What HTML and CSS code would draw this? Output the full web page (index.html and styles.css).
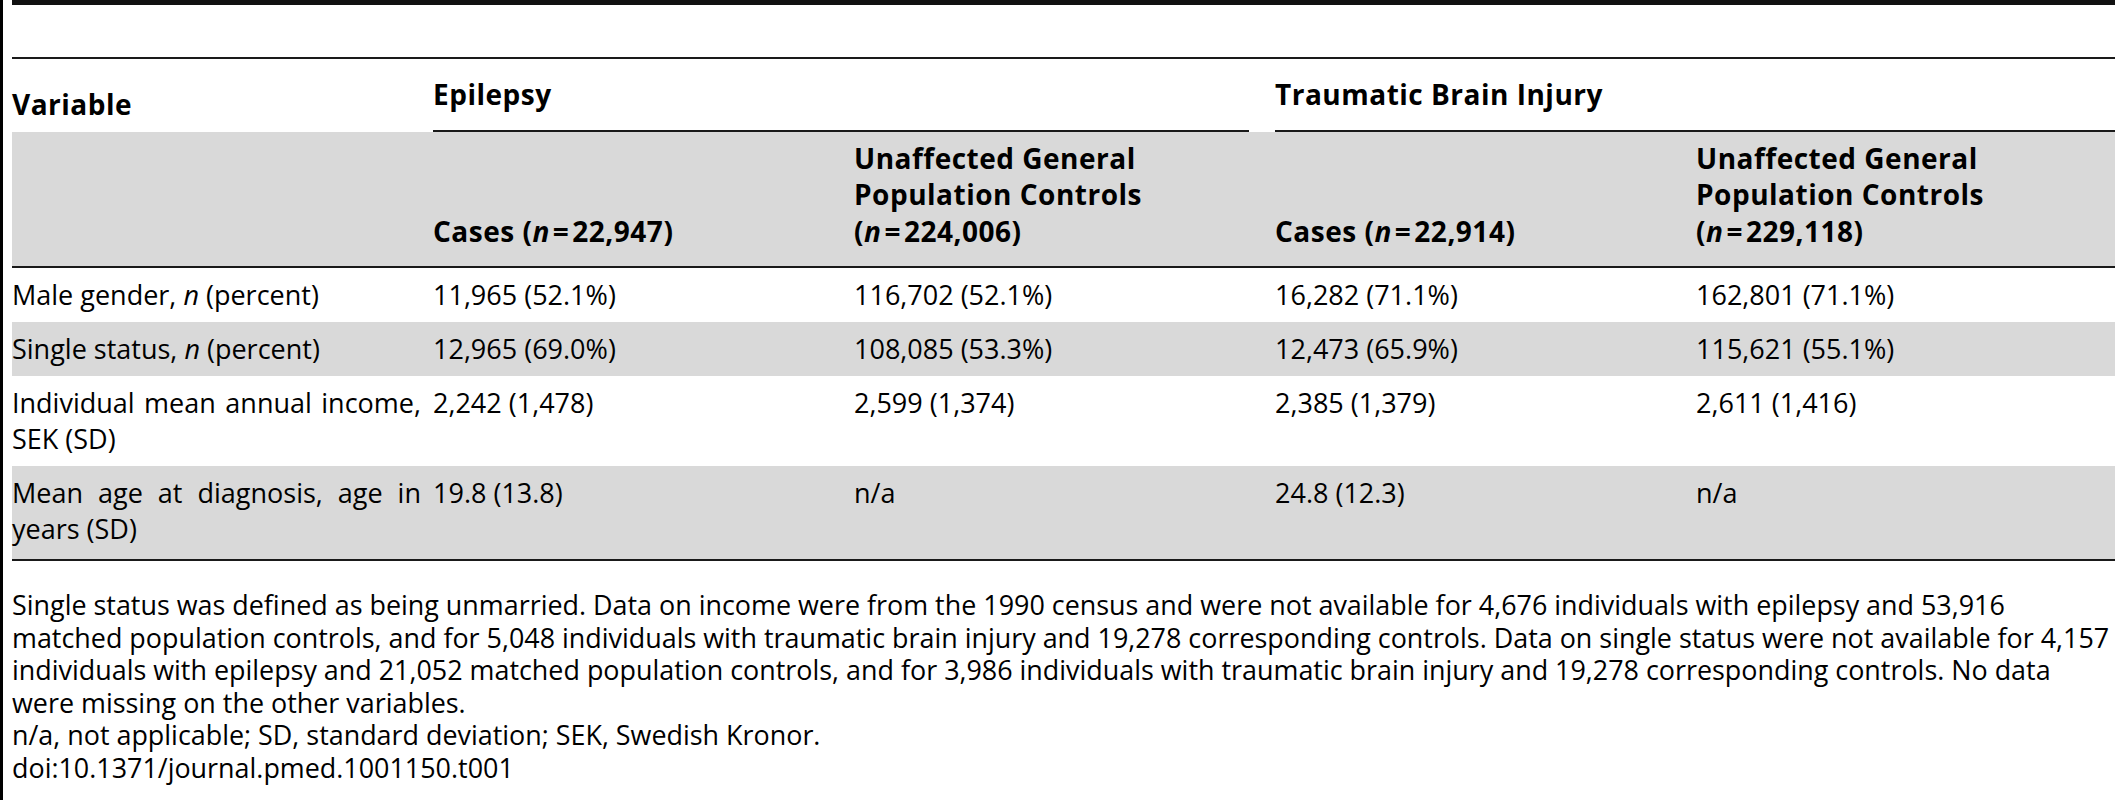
FILE: index.html
```html
<!DOCTYPE html>
<html lang="en">
<head>
    <meta charset="UTF-8">
    <title>Table 1. Characteristics of cases and controls</title>
    <link rel="stylesheet" href="styles.css">
</head>
<body>

<div class="sheet">
    <div class="frame">
        <table class="data">
            <colgroup>
                <col class="col">
                <col class="col">
                <col class="col">
                <col class="col">
                <col class="col-last">
            </colgroup>
            <thead>
                <tr class="groups">
                    <th class="var">Variable</th>
                    <th colspan="2"><div class="group">Epilepsy</div></th>
                    <th colspan="2"><div class="group">Traumatic Brain Injury</div></th>
                </tr>
                <tr class="cols">
                    <th></th>
                    <th>Cases <span class="count">(<i>n</i><span class="eq">=</span>22,947)</span></th>
                    <th>Unaffected General Population Controls <span class="count">(<i>n</i><span class="eq">=</span>224,006)</span></th>
                    <th>Cases <span class="count">(<i>n</i><span class="eq">=</span>22,914)</span></th>
                    <th>Unaffected General Population Controls <span class="count">(<i>n</i><span class="eq">=</span>229,118)</span></th>
                </tr>
            </thead>
            <tbody>
                <tr>
                    <td>Male gender, <i>n</i> (percent)</td>
                    <td>11,965 (52.1%)</td>
                    <td>116,702 (52.1%)</td>
                    <td>16,282 (71.1%)</td>
                    <td>162,801 (71.1%)</td>
                </tr>
                <tr class="shaded">
                    <td>Single status, <i>n</i> (percent)</td>
                    <td>12,965 (69.0%)</td>
                    <td>108,085 (53.3%)</td>
                    <td>12,473 (65.9%)</td>
                    <td>115,621 (55.1%)</td>
                </tr>
                <tr>
                    <td>Individual mean annual income, SEK (SD)</td>
                    <td>2,242 (1,478)</td>
                    <td>2,599 (1,374)</td>
                    <td>2,385 (1,379)</td>
                    <td>2,611 (1,416)</td>
                </tr>
                <tr class="shaded last">
                    <td>Mean age at diagnosis, age in years (SD)</td>
                    <td>19.8 (13.8)</td>
                    <td>n/a</td>
                    <td>24.8 (12.3)</td>
                    <td>n/a</td>
                </tr>
            </tbody>
        </table>
    </div>

    <!-- footnotes kept as one block; line breaks come from pre-line -->
    <p class="notes">Single status was defined as being unmarried. Data on income were from the 1990 census and were not available for 4,676 individuals with epilepsy and 53,916 matched population controls, and for 5,048 individuals with traumatic brain injury and 19,278 corresponding controls. Data on single status were not available for 4,157 individuals with epilepsy and 21,052 matched population controls, and for 3,986 individuals with traumatic brain injury and 19,278 corresponding controls. No data were missing on the other variables.
n/a, not applicable; SD, standard deviation; SEK, Swedish Kronor.
doi:10.1371/journal.pmed.1001150.t001</p>
</div>

</body>
</html>
```

FILE: styles.css
```css
/* Page frame */
body {
    margin: 0;
    overflow: hidden;
    background: #fff;
    color: #000;
    font-family: 'Open Sans', 'Noto Sans', sans-serif;
}

.sheet {
    width: 2160px;
    min-height: 800px;
    border-left: 3px solid #000;
    padding-left: 9px;
}

.frame {
    border-top: 5px solid #111;
    padding-top: 52px;
}

/* Table */
.data {
    border-collapse: separate;
    border-spacing: 0;
    table-layout: fixed;
    width: 2146px;
    border-top: 2px solid #1a1a1a;
}

.data .col {
    width: 421px;
}

.data .col-last {
    width: 462px;
}

.data th,
.data td {
    padding: 9px 12px 9px 0;
    font-size: 27px;
    line-height: 36px;
    text-align: justify;
    vertical-align: top;
}

.data th {
    font-size: 28px;
    line-height: 36.5px;
    font-weight: bold;
    letter-spacing: 0.5px;
    text-align: left;
    vertical-align: bottom;
}

.data .cols th:last-child,
.data tbody td:last-child {
    padding-right: 53px;
}

.count {
    white-space: nowrap;
}

.eq {
    margin: 0 3px;
}

/* Spanning header row */
.groups th {
    padding-top: 17px;
    padding-bottom: 0;
}

.groups .var {
    padding-bottom: 9px;
}

.groups .group {
    margin-right: 14px;
    padding-bottom: 17px;
    border-bottom: 2px solid #1a1a1a;
}

/* Column header row */
.cols th {
    background: #d9d9d9;
    padding-top: 8px;
    padding-bottom: 17px;
    border-bottom: 2px solid #1a1a1a;
}

/* Body rows */
.shaded td {
    background: #d9d9d9;
}

.last td {
    padding-bottom: 12px;
    border-bottom: 2px solid #1a1a1a;
}

/* Footnotes */
.notes {
    width: 2102px;
    margin: 28px 0 0;
    font-size: 26.9px;
    line-height: 32.6px;
    white-space: pre-line;
}
```
